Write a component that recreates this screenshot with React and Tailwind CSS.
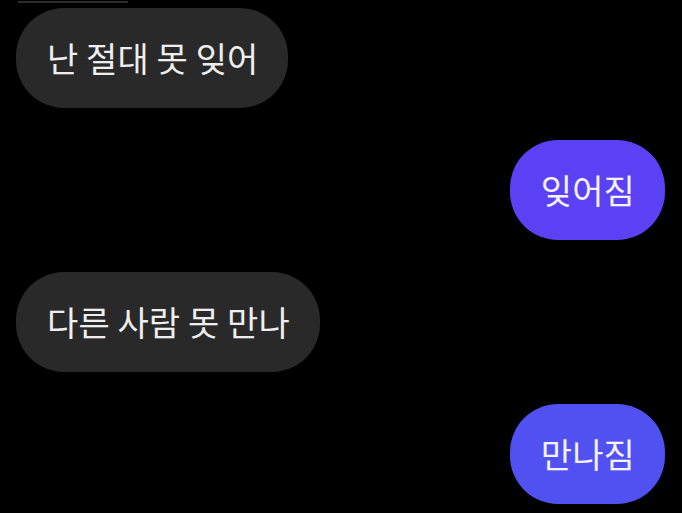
const messages = [
  { side: 'left', text: '난 절대 못 잊어' },
  { side: 'right', text: '잊어짐', color: 'bg-[#5b41f4]' },
  { side: 'left', text: '다른 사람 못 만나' },
  { side: 'right', text: '만나짐', color: 'bg-[#5151f1]' },
];

function Bubble({ side, text, color }) {
  const isMe = side === 'right';
  return (
    <div className={isMe ? 'flex justify-end' : 'flex justify-start'}>
      <div
        className={
          'h-[100px] flex items-center pl-[31px] pr-[30px] rounded-[48px] text-[34px] font-normal leading-none tracking-[0.1px] ' +
          (isMe ? `${color} text-[#f4f2ff]` : 'bg-[#292929] text-[#eeeeee]')
        }
      >
        {text}
      </div>
    </div>
  );
}

export default function App() {
  return (
    <div
      className="w-[682px] h-[513px] bg-black overflow-hidden"
      style={{ fontFamily: '"Noto Sans CJK KR", "Noto Sans", sans-serif' }}
    >
      <div className="h-[2px] mt-px ml-[18px] w-[110px] bg-[#2c2c2c]" />
      <div className="flex flex-col gap-[32px] pt-[5px] pl-[16px] pr-[17px]">
        {messages.map((m, i) => (
          <Bubble key={i} {...m} />
        ))}
      </div>
    </div>
  );
}
